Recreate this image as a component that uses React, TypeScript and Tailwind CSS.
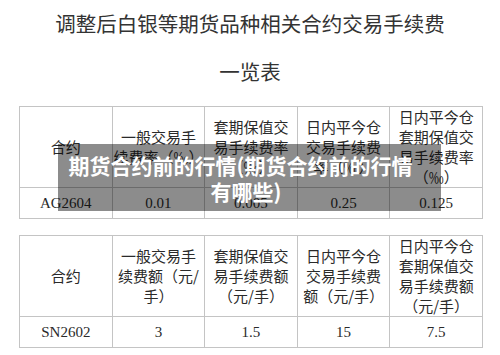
import React from "react";

type Table = {
  head: string[][];
  row: string[];
  headH: string;
};

const tables: Table[] = [
  {
    head: [
      ["合约"],
      ["一般交易手", "续费率（‰）"],
      ["套期保值交", "易手续费率", "（‰）"],
      ["日内平今仓", "交易手续费", "率（‰）"],
      ["日内平今仓", "套期保值交", "易手续费率", "（‰）"],
    ],
    row: ["AG2604", "0.01", "0.005", "0.25", "0.125"],
    headH: "h-[80px]",
  },
  {
    head: [
      ["合约"],
      ["一般交易手", "续费额（元/", "手）"],
      ["套期保值交", "易手续费额", "（元/手）"],
      ["日内平今仓", "交易手续费", "额（元/手）"],
      ["日内平今仓", "套期保值交", "易手续费额", "（元/手）"],
    ],
    row: ["SN2602", "3", "1.5", "15", "7.5"],
    headH: "h-[78px]",
  },
];

function FeeTable({ t }: { t: Table }) {
  return (
    <table className="w-[464px] table-fixed border-collapse ml-[19px]">
      <tbody>
        <tr className={t.headH}>
          {t.head.map((lines, i) => (
            <td
              key={i}
              className="border border-[#c4c4c4] p-0 text-center align-middle text-[15px] leading-[20px] text-[#2a2a2a] whitespace-nowrap overflow-hidden font-['Noto_Sans_CJK_SC',sans-serif]"
            >
              {lines.map((l, j) => (
                <div key={j}>{l}</div>
              ))}
            </td>
          ))}
        </tr>
        <tr className="h-[31px]">
          {t.row.map((v, i) => (
            <td
              key={i}
              className="border border-[#c4c4c4] p-0 text-center align-middle text-[15px] text-[#2a2a2a] font-['Liberation_Serif',serif]"
            >
              {v}
            </td>
          ))}
        </tr>
      </tbody>
    </table>
  );
}

export default function App() {
  return (
    <div className="relative w-[500px] h-[355px] bg-white overflow-hidden">
      <div className="pt-[9px] text-center text-[20.5px] leading-[28px] text-[#333] font-['Noto_Sans_CJK_SC',sans-serif]">
        <p>调整后白银等期货品种相关合约交易手续费</p>
        <p className="mt-[20px]">一览表</p>
      </div>

      <div className="mt-[21px]">
        <FeeTable t={tables[0]} />
      </div>
      <div className="mt-[16px]">
        <FeeTable t={tables[1]} />
      </div>

      {/* caption strip laid over the first table */}
      <div className="absolute left-[58px] top-[144px] w-[383px] h-[67px] bg-black/45 flex flex-col items-center justify-center text-white font-bold text-[21px] leading-[26px] font-['Noto_Sans_CJK_SC',sans-serif]">
        <span className="mr-[18px]">期货合约前的行情(期货合约前的行情</span>
        <span className="mr-[7px]">有哪些)</span>
      </div>
    </div>
  );
}
